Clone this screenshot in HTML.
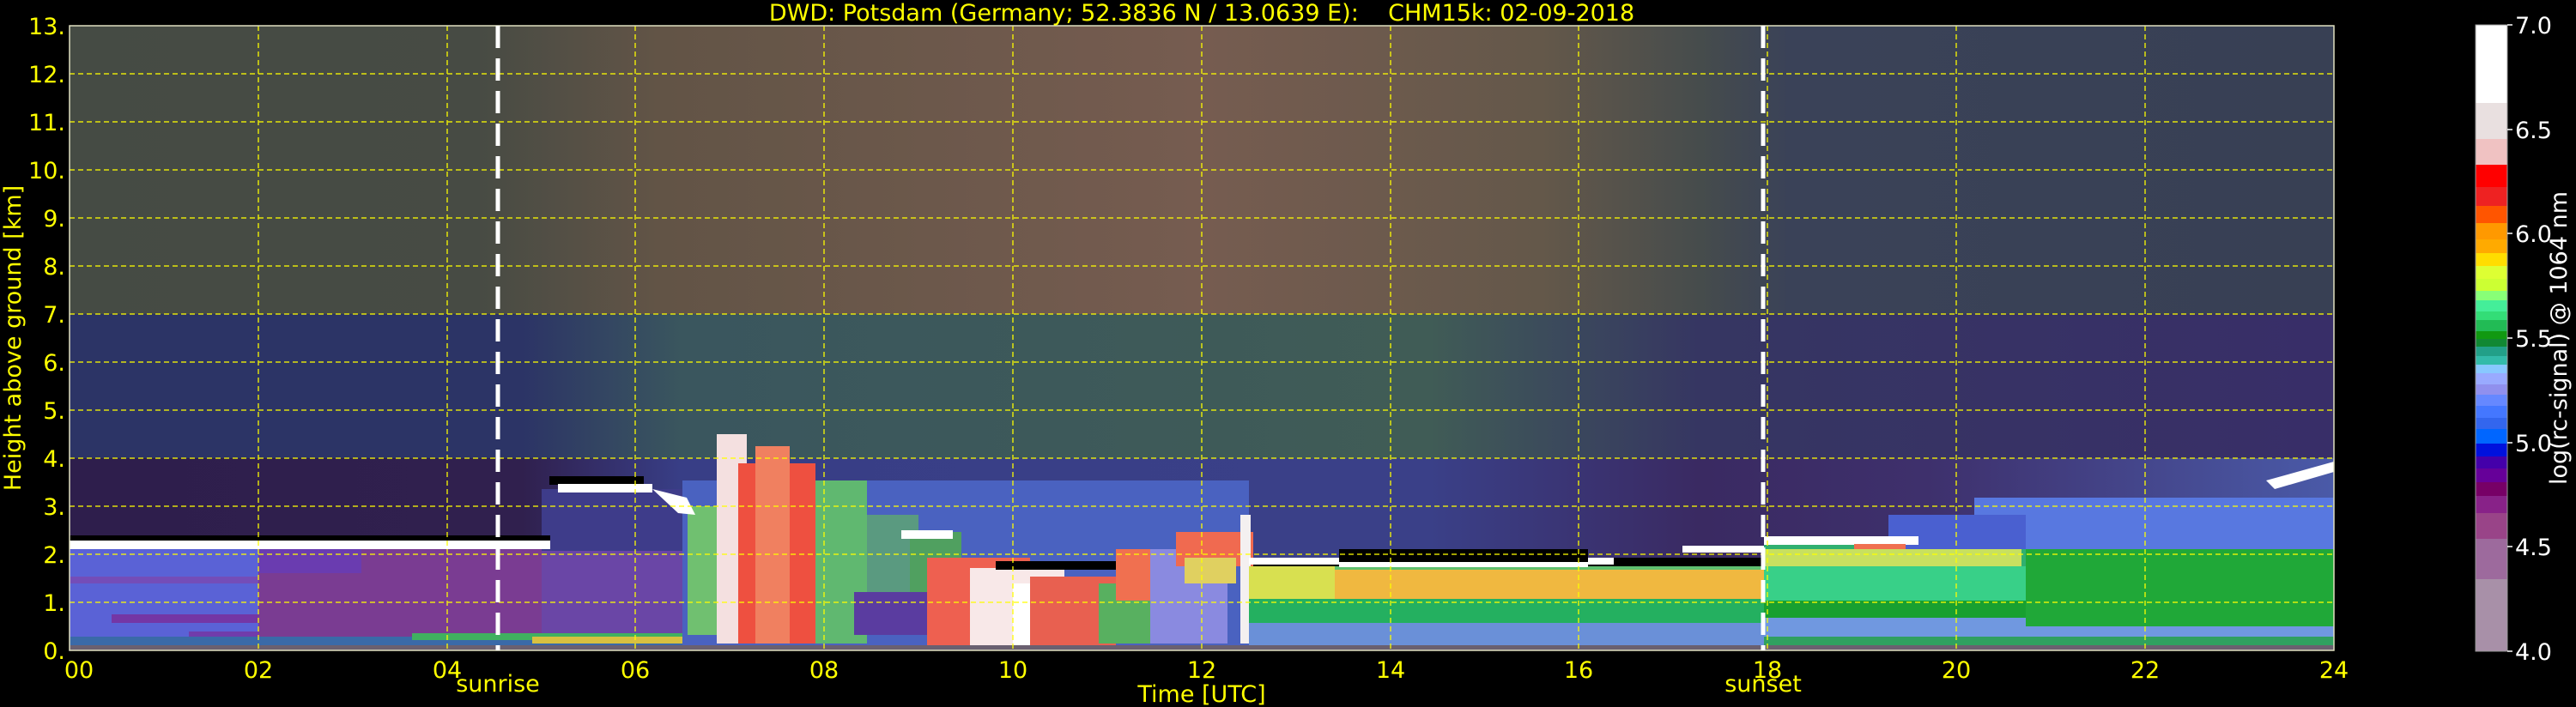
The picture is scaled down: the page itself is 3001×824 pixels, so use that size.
<!DOCTYPE html>
<html><head><meta charset="utf-8"><style>
html,body{margin:0;padding:0;background:#000;width:3001px;height:824px;overflow:hidden}
svg{display:block}
text{font-family:"DejaVu Sans","Liberation Sans",sans-serif}
</style></head><body>
<svg width="3001" height="824" viewBox="0 0 3001 824" xmlns="http://www.w3.org/2000/svg">
<defs>
<linearGradient id="hi" x1="0" x2="1" y1="0" y2="0">
<stop offset="0" stop-color="#454b44"/><stop offset="0.18" stop-color="#474b44"/>
<stop offset="0.26" stop-color="#625446"/><stop offset="0.5" stop-color="#765c50"/>
<stop offset="0.65" stop-color="#64584a"/><stop offset="0.72" stop-color="#464c4c"/>
<stop offset="0.76" stop-color="#3a4258"/><stop offset="1" stop-color="#384054"/></linearGradient>
<linearGradient id="mid" x1="0" x2="1" y1="0" y2="0">
<stop offset="0" stop-color="#2c3466"/><stop offset="0.2" stop-color="#2c3466"/>
<stop offset="0.27" stop-color="#3a565e"/><stop offset="0.6" stop-color="#405c56"/>
<stop offset="0.72" stop-color="#363662"/><stop offset="1" stop-color="#382e68"/></linearGradient>
<linearGradient id="low" x1="0" x2="1" y1="0" y2="0">
<stop offset="0" stop-color="#2e1e4c"/><stop offset="0.2" stop-color="#30204e"/>
<stop offset="0.27" stop-color="#383e86"/><stop offset="0.6" stop-color="#3a4088"/>
<stop offset="0.72" stop-color="#3a2a62"/><stop offset="0.82" stop-color="#3e306c"/><stop offset="1" stop-color="#4a5aa8"/></linearGradient>
</defs>

<rect x="81" y="30" width="2638" height="340" fill="url(#hi)"/>
<rect x="81" y="366" width="2638" height="170" fill="url(#mid)"/>
<rect x="81" y="534" width="2638" height="120" fill="url(#low)"/>

<rect x="81" y="640" width="220" height="112" fill="#5a62d6"/>
<rect x="81" y="672" width="220" height="8" fill="#7a48b0" opacity="0.8"/>
<rect x="130" y="716" width="171" height="10" fill="#7a2c98" opacity="0.8"/>
<rect x="220" y="736" width="81" height="6" fill="#7a2c98" opacity="0.7"/>
<rect x="301" y="640" width="330" height="112" fill="#7a3c92"/>
<rect x="301" y="640" width="120" height="28" fill="#6a3cb0"/>
<rect x="631" y="640" width="170" height="112" fill="#6a46a6"/>
<rect x="631" y="570" width="170" height="72" fill="#3e3c8a"/>
<rect x="81" y="742" width="720" height="10" fill="#3a6aa8"/>
<rect x="480" y="738" width="320" height="8" fill="#40b060"/>
<rect x="620" y="742" width="180" height="8" fill="#d8c040"/>

<rect x="795" y="560" width="660" height="192" fill="#4a62c0"/>
<rect x="801" y="590" width="40" height="150" fill="#70c070"/>
<rect x="835" y="506" width="35" height="244" fill="#f4e0e0"/>
<rect x="860" y="540" width="90" height="210" fill="#ee5040"/>
<rect x="880" y="520" width="40" height="230" fill="#f08060"/>
<rect x="950" y="560" width="60" height="190" fill="#60b870"/>
<rect x="995" y="690" width="130" height="50" fill="#5a3ca0"/>
<rect x="1010" y="600" width="60" height="90" fill="#5a9a80"/>
<rect x="1060" y="620" width="60" height="70" fill="#50a060"/>
<rect x="1080" y="650" width="120" height="102" fill="#ee6050"/>
<rect x="1130" y="662" width="110" height="90" fill="#f8e8e8"/>
<rect x="1180" y="680" width="30" height="72" fill="#ffffff"/>
<rect x="1200" y="672" width="100" height="80" fill="#e86050"/>
<rect x="1280" y="680" width="90" height="70" fill="#58b060"/>
<rect x="1300" y="640" width="70" height="60" fill="#f07050"/>
<rect x="1340" y="640" width="90" height="110" fill="#8a8ae0"/>
<rect x="1370" y="620" width="90" height="40" fill="#f06a50"/>
<rect x="1380" y="650" width="60" height="30" fill="#e0d060"/>
<rect x="1445" y="600" width="12" height="150" fill="#f4f0f0"/>

<rect x="1455" y="660" width="600" height="92" fill="#60c070"/>
<rect x="1455" y="664" width="600" height="34" fill="#f0b840"/>
<rect x="1455" y="660" width="100" height="40" fill="#d8e050"/>
<rect x="1455" y="698" width="600" height="28" fill="#24b060"/>
<rect x="1455" y="726" width="600" height="26" fill="#6a90d8"/>
<rect x="1455" y="650" width="600" height="8" fill="#ffffff"/>
<rect x="1560" y="640" width="290" height="16" fill="#000"/>
<rect x="1560" y="655" width="290" height="6" fill="#ffffff"/>
<rect x="1880" y="650" width="180" height="10" fill="#000"/>
<rect x="1960" y="636" width="95" height="8" fill="#ffffff"/>

<rect x="2055" y="630" width="664" height="122" fill="#30b070"/>
<rect x="2055" y="640" width="300" height="24" fill="#c8e060"/>
<rect x="2055" y="660" width="664" height="40" fill="#38d088"/>
<rect x="2055" y="700" width="664" height="20" fill="#18a030"/>
<rect x="2055" y="720" width="664" height="22" fill="#7098e0"/>
<rect x="2055" y="742" width="664" height="10" fill="#30a060"/>
<rect x="2360" y="630" width="359" height="100" fill="#20a838"/>
<rect x="2300" y="580" width="419" height="60" fill="#5878e0"/>
<rect x="2200" y="600" width="160" height="40" fill="#4a60d0"/>
<rect x="2055" y="625" width="180" height="10" fill="#ffffff"/>
<rect x="2160" y="634" width="60" height="6" fill="#f07050"/>
<polygon points="2640,560 2719,538 2719,550 2650,570" fill="#ffffff"/>

<rect x="81" y="624" width="560" height="8" fill="#000"/>
<rect x="81" y="630" width="560" height="10" fill="#ffffff"/>
<rect x="640" y="555" width="110" height="10" fill="#000"/>
<rect x="650" y="564" width="110" height="10" fill="#ffffff"/>
<polygon points="760,570 800,580 810,600 790,598" fill="#ffffff"/>
<rect x="1050" y="618" width="60" height="10" fill="#ffffff"/>
<rect x="1160" y="654" width="140" height="10" fill="#000"/>

<rect x="81" y="752" width="2638" height="6" fill="#6a6070"/>

<g stroke="#ffff00" stroke-width="1.5" stroke-dasharray="6,4" opacity="0.85">
<line x1="81" x2="2719" y1="86" y2="86"/><line x1="81" x2="2719" y1="142" y2="142"/>
<line x1="81" x2="2719" y1="198" y2="198"/><line x1="81" x2="2719" y1="254" y2="254"/>
<line x1="81" x2="2719" y1="310" y2="310"/><line x1="81" x2="2719" y1="366" y2="366"/>
<line x1="81" x2="2719" y1="422" y2="422"/><line x1="81" x2="2719" y1="478" y2="478"/>
<line x1="81" x2="2719" y1="534" y2="534"/><line x1="81" x2="2719" y1="590" y2="590"/>
<line x1="81" x2="2719" y1="646" y2="646"/><line x1="81" x2="2719" y1="702" y2="702"/>
<line y1="30" y2="758" x1="301" x2="301"/><line y1="30" y2="758" x1="521" x2="521"/>
<line y1="30" y2="758" x1="740" x2="740"/><line y1="30" y2="758" x1="960" x2="960"/>
<line y1="30" y2="758" x1="1180" x2="1180"/><line y1="30" y2="758" x1="1400" x2="1400"/>
<line y1="30" y2="758" x1="1620" x2="1620"/><line y1="30" y2="758" x1="1839" x2="1839"/>
<line y1="30" y2="758" x1="2059" x2="2059"/><line y1="30" y2="758" x1="2279" x2="2279"/>
<line y1="30" y2="758" x1="2499" x2="2499"/>
</g>
<rect x="81" y="30" width="2638" height="728" fill="none" stroke="#e0e0c0" stroke-width="1.5"/>

<g stroke="#ffffff" stroke-width="5" stroke-dasharray="26,12">
<line x1="580" x2="580" y1="30" y2="758"/>
<line x1="2054" x2="2054" y1="30" y2="758"/>
</g>

<g fill="#ffff00" font-size="27">
<text x="1400" y="24" text-anchor="middle" font-size="27" xml:space="preserve">DWD: Potsdam (Germany; 52.3836 N / 13.0639 E):&#160;&#160;&#160;&#160;CHM15k: 02-09-2018</text>
<g text-anchor="end">
<text x="76" y="40">13.</text><text x="76" y="96">12.</text><text x="76" y="152">11.</text>
<text x="76" y="208">10.</text><text x="76" y="264">9.</text><text x="76" y="320">8.</text>
<text x="76" y="376">7.</text><text x="76" y="432">6.</text><text x="76" y="488">5.</text>
<text x="76" y="544">4.</text><text x="76" y="600">3.</text><text x="76" y="656">2.</text>
<text x="76" y="712">1.</text><text x="76" y="768">0.</text>
</g>
<g text-anchor="middle">
<text x="92" y="790">00</text><text x="301" y="790">02</text><text x="521" y="790">04</text>
<text x="740" y="790">06</text><text x="960" y="790">08</text><text x="1180" y="790">10</text>
<text x="1400" y="790">12</text><text x="1620" y="790">14</text><text x="1839" y="790">16</text>
<text x="2059" y="790">18</text><text x="2279" y="790">20</text><text x="2499" y="790">22</text>
<text x="2719" y="790">24</text>
<text x="580" y="806">sunrise</text><text x="2054" y="806">sunset</text>
<text x="1400" y="818">Time [UTC]</text>
</g>
<text transform="translate(24,394) rotate(-90)" text-anchor="middle">Height above ground [km]</text>
</g>

<g>
<rect x="2884" y="29" width="37" height="91" fill="#ffffff"/>
<rect x="2884" y="120" width="37" height="42" fill="#e9e0e0"/>
<rect x="2884" y="162" width="37" height="30" fill="#f0c2c2"/>
<rect x="2884" y="192" width="37" height="26" fill="#ff0000"/>
<rect x="2884" y="218" width="37" height="22" fill="#ee2222"/>
<rect x="2884" y="240" width="37" height="20" fill="#ff5500"/>
<rect x="2884" y="260" width="37" height="19" fill="#ff9900"/>
<rect x="2884" y="279" width="37" height="16" fill="#ffaa00"/>
<rect x="2884" y="295" width="37" height="15" fill="#ffdd00"/>
<rect x="2884" y="310" width="37" height="15" fill="#ddff33"/>
<rect x="2884" y="325" width="37" height="14" fill="#ccff33"/>
<rect x="2884" y="339" width="37" height="11" fill="#88ff77"/>
<rect x="2884" y="350" width="37" height="13" fill="#44ee99"/>
<rect x="2884" y="363" width="37" height="10" fill="#33dd77"/>
<rect x="2884" y="373" width="37" height="13" fill="#22bb55"/>
<rect x="2884" y="386" width="37" height="9" fill="#119911"/>
<rect x="2884" y="395" width="37" height="9" fill="#118833"/>
<rect x="2884" y="404" width="37" height="11" fill="#22a088"/>
<rect x="2884" y="415" width="37" height="10" fill="#33bbaa"/>
<rect x="2884" y="425" width="37" height="10" fill="#88c8ff"/>
<rect x="2884" y="435" width="37" height="13" fill="#99aaff"/>
<rect x="2884" y="448" width="37" height="12" fill="#9090ee"/>
<rect x="2884" y="460" width="37" height="13" fill="#6688ff"/>
<rect x="2884" y="473" width="37" height="14" fill="#4477ff"/>
<rect x="2884" y="487" width="37" height="13" fill="#3366ee"/>
<rect x="2884" y="500" width="37" height="17" fill="#0066ff"/>
<rect x="2884" y="517" width="37" height="15" fill="#0011dd"/>
<rect x="2884" y="532" width="37" height="14" fill="#4400aa"/>
<rect x="2884" y="546" width="37" height="16" fill="#660099"/>
<rect x="2884" y="562" width="37" height="16" fill="#770066"/>
<rect x="2884" y="578" width="37" height="20" fill="#882288"/>
<rect x="2884" y="598" width="37" height="30" fill="#994488"/>
<rect x="2884" y="628" width="37" height="47" fill="#9d6a9d"/>
<rect x="2884" y="675" width="37" height="84" fill="#a890a8"/>
<rect x="2884" y="29" width="37" height="730" fill="none" stroke="#999" stroke-width="1"/>
</g>
<g fill="#ffffff" font-size="27">
<g stroke="#ffffff" stroke-width="1.5">
<line x1="2921" x2="2927" y1="29" y2="29"/><line x1="2921" x2="2927" y1="151" y2="151"/>
<line x1="2921" x2="2927" y1="272" y2="272"/><line x1="2921" x2="2927" y1="394" y2="394"/>
<line x1="2921" x2="2927" y1="516" y2="516"/><line x1="2921" x2="2927" y1="637" y2="637"/>
<line x1="2921" x2="2927" y1="759" y2="759"/>
</g>
<text x="2930" y="39">7.0</text><text x="2930" y="161">6.5</text><text x="2930" y="282">6.0</text>
<text x="2930" y="404">5.5</text><text x="2930" y="526">5.0</text><text x="2930" y="647">4.5</text>
<text x="2930" y="769">4.0</text>
<text transform="translate(2990,394) rotate(-90)" text-anchor="middle">log(rc-signal) @ 1064 nm</text>
</g>
</svg>
</body></html>
